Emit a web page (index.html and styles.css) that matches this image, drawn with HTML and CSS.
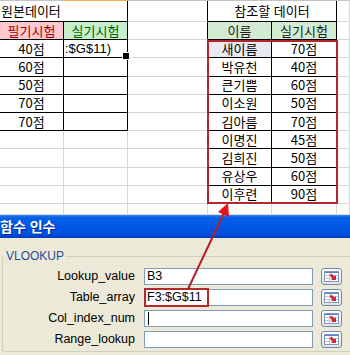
FILE: index.html
```html
<!DOCTYPE html>
<html lang="ko">
<head>
    <meta charset="UTF-8">
    <title>함수 인수 - VLOOKUP</title>
    <link rel="stylesheet" href="styles.css">
</head>
<body>
    <div class="colhead">
        <span></span><span class="on"></span><span></span><span></span><span></span><span></span>
    </div>

    <div class="sheet">
        <!-- row 1 -->
        <div class="c bk span2 left">원본데이터</div>
        <div class="c edge"></div>
        <div class="c bk span2">참조할 데이터</div>
        <div class="c"></div>
        <!-- row 2 -->
        <div class="c bk bad">필기시험</div>
        <div class="c bk good">실기시험</div>
        <div class="c edge"></div>
        <div class="c bk head">이름</div>
        <div class="c bk head">실기시험</div>
        <div class="c"></div>
        <!-- row 3 -->
        <div class="c bk">40점</div>
        <div class="c bk active">:$G$11)</div>
        <div class="c edge"></div>
        <div class="c bk sel">새이름</div>
        <div class="c bk">70점</div>
        <div class="c"></div>
        <!-- row 4 -->
        <div class="c bk">60점</div>
        <div class="c bk"></div>
        <div class="c edge"></div>
        <div class="c bk">박유천</div>
        <div class="c bk">40점</div>
        <div class="c"></div>
        <!-- row 5 -->
        <div class="c bk">50점</div>
        <div class="c bk"></div>
        <div class="c edge"></div>
        <div class="c bk">큰기쁨</div>
        <div class="c bk">60점</div>
        <div class="c"></div>
        <!-- row 6 -->
        <div class="c bk">70점</div>
        <div class="c bk"></div>
        <div class="c edge"></div>
        <div class="c bk">이소원</div>
        <div class="c bk">50점</div>
        <div class="c"></div>
        <!-- row 7 -->
        <div class="c bk">70점</div>
        <div class="c bk"></div>
        <div class="c edge"></div>
        <div class="c bk">김아름</div>
        <div class="c bk">70점</div>
        <div class="c"></div>
        <!-- row 8 -->
        <div class="c"></div>
        <div class="c"></div>
        <div class="c edge"></div>
        <div class="c bk">이명진</div>
        <div class="c bk">45점</div>
        <div class="c"></div>
        <!-- row 9 -->
        <div class="c"></div>
        <div class="c"></div>
        <div class="c edge"></div>
        <div class="c bk">김희진</div>
        <div class="c bk">50점</div>
        <div class="c"></div>
        <!-- row 10 -->
        <div class="c"></div>
        <div class="c"></div>
        <div class="c edge"></div>
        <div class="c bk">유상우</div>
        <div class="c bk">60점</div>
        <div class="c"></div>
        <!-- row 11 -->
        <div class="c"></div>
        <div class="c"></div>
        <div class="c edge"></div>
        <div class="c bk">이후련</div>
        <div class="c bk">90점</div>
        <div class="c"></div>
        <!-- row 12 (cut off) -->
        <div class="c"></div>
        <div class="c"></div>
        <div class="c"></div>
        <div class="c"></div>
        <div class="c"></div>
        <div class="c"></div>

        <!-- red box around F3:G11 -->
        <div class="pick"></div>
    </div>

    <div class="dialog">
        <div class="titlebar">함수 인수</div>
        <div class="dlg-body">
            <fieldset class="args">
                <legend>VLOOKUP</legend>
                <div class="arg-grid">
                    <label>Lookup_value</label>
                    <div class="field">B3</div>
                    <button class="ref" type="button"><svg width="15" height="11" viewBox="0 0 15 11"><rect x="0.5" y="0.5" width="14" height="10" fill="#fff" stroke="#7b95c4"/><path d="M1 1.5h13" stroke="#5f82cc"/><path d="M1 4.5h13M1 7.5h13M5.5 2v8" stroke="#b7c7e6"/><path d="M12 9V4l-1.5 1.5-3-3-2 2 3 3L7 9z" fill="#d8232a"/></svg></button>

                    <label>Table_array</label>
                    <div class="field"><span class="hl">F3:$G$11</span></div>
                    <button class="ref" type="button"><svg width="15" height="11" viewBox="0 0 15 11"><rect x="0.5" y="0.5" width="14" height="10" fill="#fff" stroke="#7b95c4"/><path d="M1 1.5h13" stroke="#5f82cc"/><path d="M1 4.5h13M1 7.5h13M5.5 2v8" stroke="#b7c7e6"/><path d="M12 9V4l-1.5 1.5-3-3-2 2 3 3L7 9z" fill="#d8232a"/></svg></button>

                    <label>Col_index_num</label>
                    <div class="field"><span class="caret"></span></div>
                    <button class="ref" type="button"><svg width="15" height="11" viewBox="0 0 15 11"><rect x="0.5" y="0.5" width="14" height="10" fill="#fff" stroke="#7b95c4"/><path d="M1 1.5h13" stroke="#5f82cc"/><path d="M1 4.5h13M1 7.5h13M5.5 2v8" stroke="#b7c7e6"/><path d="M12 9V4l-1.5 1.5-3-3-2 2 3 3L7 9z" fill="#d8232a"/></svg></button>

                    <label>Range_lookup</label>
                    <div class="field"></div>
                    <button class="ref" type="button"><svg width="15" height="11" viewBox="0 0 15 11"><rect x="0.5" y="0.5" width="14" height="10" fill="#fff" stroke="#7b95c4"/><path d="M1 1.5h13" stroke="#5f82cc"/><path d="M1 4.5h13M1 7.5h13M5.5 2v8" stroke="#b7c7e6"/><path d="M12 9V4l-1.5 1.5-3-3-2 2 3 3L7 9z" fill="#d8232a"/></svg></button>
                </div>
            </fieldset>
        </div>
    </div>

    <!-- red arrow from the Table_array box to the table -->
    <svg class="callout" width="350" height="355" viewBox="0 0 350 355">
        <line x1="188" y1="289" x2="224" y2="213" stroke="#b3202a" stroke-width="2"/>
        <polygon points="228,203 229,217 218,212" fill="#e3141c"/>
    </svg>
</body>
</html>
```

FILE: styles.css
```css
* {
    box-sizing: border-box;
}

html, body {
    margin: 0;
    padding: 0;
}

body {
    position: relative;
    width: 350px;
    height: 355px;
    overflow: hidden;
    display: flex;
    flex-direction: column;
    background-color: #fff;
    font-family: "Noto Sans CJK KR", sans-serif;
}

/* bottom edge of the column headers */
.colhead {
    display: grid;
    grid-template-columns: 64px 64px 80px 64px 65px 1fr;
    height: 1px;
    background-color: #c4c4c4;
}

.colhead .on {
    background-color: #f4b04e;
}

/* worksheet */
.sheet {
    position: relative;
    display: grid;
    grid-template-columns: 64px 64px 80px 64px 65px 1fr;
    grid-template-rows: 21px repeat(10, 18.2px) 1fr;
    height: 214px;
    font-size: 13px;
    color: #000;
}

.c {
    display: flex;
    align-items: center;
    justify-content: center;
    overflow: hidden;
    white-space: nowrap;
    line-height: 16px;
    border-right: 1px solid #d6d6d6;
    border-bottom: 1px solid #d6d6d6;
}

.bk {
    border-right-color: #000;
    border-bottom-color: #000;
}

.edge {
    border-right-color: #000;
}

.span2 {
    grid-column: span 2;
}

.left {
    justify-content: flex-start;
    padding-left: 1px;
}

.bad {
    background-color: #ffc7ce;
    color: #9c0006;
}

.good {
    background-color: #c6efce;
    color: #006100;
}

.head {
    background-color: #d2ebd2;
    color: #1c1c1c;
}

.sel {
    background-color: #e9e9f1;
}

.active {
    position: relative;
    overflow: visible;
    justify-content: flex-start;
    padding-left: 1px;
    font-family: "Liberation Sans", "Noto Sans CJK KR", sans-serif;
    z-index: 1;
}

/* fill handle */
.active:after {
    content: "";
    position: absolute;
    right: -3px;
    bottom: -3px;
    width: 6px;
    height: 6px;
    background-color: #000;
    border: 1px solid #fff;
}

.pick {
    position: absolute;
    grid-column: 4 / 6;
    grid-row: 3 / 12;
    top: 0;
    left: -1px;
    right: -1px;
    bottom: 0;
    border: 2px solid #b5262c;
    pointer-events: none;
}

/* function arguments dialog */
.dialog {
    flex: 1;
    display: flex;
    flex-direction: column;
    background-color: #ece9d8;
    font-family: "Liberation Sans", "Noto Sans CJK KR", sans-serif;
}

.titlebar {
    height: 23px;
    line-height: 23px;
    font-family: "Noto Sans CJK KR", sans-serif;
    font-size: 14px;
    font-weight: bold;
    color: #fff;
    text-shadow: 1px 1px #0a2a9a;
    background: linear-gradient(to bottom, #3b8df5 0, #0a60e8 2px, #0058e6 45%, #0050dc 85%, #003cbd 100%);
}

.dlg-body {
    padding: 11px 0 0 2px;
}

/* group box runs on past the right edge of the shot */
.args {
    margin: 0;
    padding: 5px 0 3px 0;
    border: 1px solid #d0d0bf;
    border-right: none;
    border-radius: 3px 0 0 3px;
}

.args legend {
    margin-left: 1px;
    padding: 0 2px;
    font-size: 12px;
    line-height: 14px;
    color: #1f4d9e;
}

.arg-grid {
    display: grid;
    grid-template-columns: 133px 169px 21px;
    grid-auto-rows: 17px;
    column-gap: 8px;
    row-gap: 4px;
    font-size: 12.5px;
    color: #000;
}

.arg-grid label {
    text-align: right;
    padding-right: 1px;
    line-height: 17px;
}

.field {
    display: flex;
    align-items: center;
    padding-left: 2px;
    background-color: #fff;
    border: 1px solid #7f9db9;
    line-height: 15px;
}

.hl {
    align-self: stretch;
    margin-left: -1px;
    padding: 0 5px 0 1px;
    outline: 2px solid #b42a2a;
}

.caret {
    width: 1px;
    height: 13px;
    margin-left: 1px;
    background-color: #000;
}

.ref {
    display: flex;
    align-items: center;
    justify-content: center;
    width: 21px;
    height: 17px;
    padding: 0;
    border: 1px solid #7388ad;
    border-radius: 3px;
    background: linear-gradient(to bottom, #fff, #e4e3dc);
}

.callout {
    position: absolute;
    top: 0;
    left: 0;
    pointer-events: none;
    z-index: 5;
}
```
